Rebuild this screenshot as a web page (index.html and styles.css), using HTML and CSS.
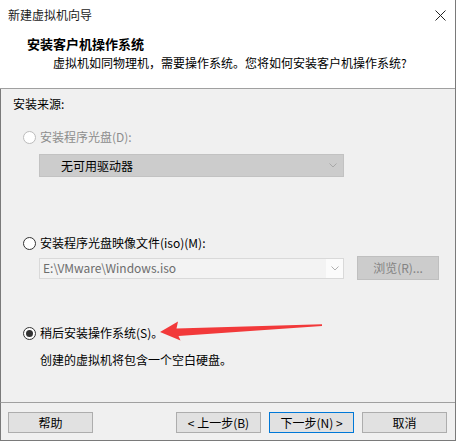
FILE: index.html
```html
<!DOCTYPE html>
<html lang="zh-CN">
<head>
<meta charset="utf-8">
<title>新建虚拟机向导</title>
<link rel="stylesheet" href="styles.css">
</head>
<body>
<div class="window">
  <div class="titlebar">
    <span class="title">新建虚拟机向导</span>
    <svg class="close" width="11" height="11" viewBox="0 0 11 11"><path d="M0.5 0.5 L10.5 10.5 M10.5 0.5 L0.5 10.5" stroke="#222" stroke-width="1" fill="none"/></svg>
  </div>
  <div class="header">
    <div class="h-title">安装客户机操作系统</div>
    <div class="h-sub">虚拟机如同物理机，需要操作系统。您将如何安装客户机操作系统?</div>
  </div>
  <div class="content">
    <div class="label">安装来源:</div>
    <div class="radio-row disabled r1"><span class="radio"></span><span>安装程序光盘(D):</span></div>
    <div class="combo combo-off">
      <span class="combo-text">无可用驱动器</span>
      <svg class="chev" width="8" height="5" viewBox="0 0 8 5"><path d="M0.5 0.5 L4 4 L7.5 0.5" stroke="#a8a8a8" fill="none"/></svg>
    </div>
    <div class="radio-row r2"><span class="radio"></span><span>安装程序光盘映像文件(iso)(M):</span></div>
    <div class="iso-row">
      <div class="combo combo-iso">
        <span class="combo-text">E:\VMware\Windows.iso</span>
        <span class="combo-btn"><svg class="chev" width="8" height="5" viewBox="0 0 8 5"><path d="M0.5 0.5 L4 4 L7.5 0.5" stroke="#b0b0b0" fill="none"/></svg></span>
      </div>
      <div class="btn btn-off browse">浏览(R)...</div>
    </div>
    <div class="radio-row r3"><span class="radio checked"></span><span>稍后安装操作系统(S)。</span></div>
    <div class="note">创建的虚拟机将包含一个空白硬盘。</div>
  </div>
  <div class="footer">
    <div class="btn">帮助</div>
    <div class="btn back">&lt; 上一步(B)</div>
    <div class="btn focus">下一步(N) &gt;</div>
    <div class="btn">取消</div>
  </div>
  <svg class="annot" width="456" height="441" viewBox="0 0 456 441">
    <polygon points="160,332 178,321.5 176.5,328.5 322,324.3 322,326 178.5,336 180.5,340.5" fill="#f2393a"/>
  </svg>
</div>
</body>
</html>
```

FILE: styles.css
```css
html, body {
  margin: 0;
  padding: 0;
  background: #fff;
}

.window {
  position: relative;
  width: 456px;
  height: 441px;
  box-sizing: border-box;
  display: flex;
  flex-direction: column;
  background: #fff;
  border-right: 1px solid #7a7a7a;
  border-bottom: 1px solid #7a7a7a;
  font-family: "Noto Sans CJK SC", "Noto Sans", sans-serif;
  font-size: 12px;
  color: #000;
}

.titlebar {
  height: 30px;
  flex: none;
  display: flex;
  align-items: center;
  justify-content: space-between;
  padding: 0 9px 0 8px;
  line-height: 16px;
}

.title {
  color: #1a1a1a;
}

.header {
  flex: none;
  height: 53px;
  padding: 5px 0 0 27px;
  border-bottom: 1px solid #a0a0a0;
}

.h-title {
  font-weight: bold;
  font-size: 13px;
  line-height: 18px;
}

.h-sub {
  margin-top: 2px;
  padding-left: 26px;
  line-height: 16px;
}

.content {
  flex: 1;
  background: #f0f0f0;
  border-left: 1px solid #7a7a7a;
  padding: 7px 0 0 12px;
}

.label {
  line-height: 16px;
}

.radio-row {
  display: flex;
  align-items: center;
  height: 16px;
  line-height: 16px;
  margin-left: 10px;
  gap: 4px;
}

.radio {
  width: 13px;
  height: 13px;
  box-sizing: border-box;
  border: 1px solid #333;
  border-radius: 50%;
  background: #fff;
  display: flex;
  align-items: center;
  justify-content: center;
}

.radio.checked::after {
  content: "";
  width: 7px;
  height: 7px;
  border-radius: 50%;
  background: #333;
}

.disabled {
  color: #8d8d8d;
}

.disabled .radio {
  border-color: #bcbcbc;
}

.r1 { margin-top: 17px; }
.r2 { margin-top: 58px; }
.r3 { margin-top: 45px; }

.combo {
  width: 305px;
  box-sizing: border-box;
  margin-left: 26px;
  display: flex;
  align-items: center;
}

.combo-off {
  margin-top: 9px;
  height: 23px;
  background: #cccccc;
  border: 1px solid #c2c2c2;
  padding: 0 6px 0 21px;
  justify-content: space-between;
}

.combo-off .combo-text {
  line-height: 16px;
}

.iso-row {
  margin-top: 5px;
  height: 24px;
  display: flex;
  align-items: center;
}

.combo-iso {
  height: 21px;
  background: #f3f3f3;
  border: 1px solid #d9d9d9;
  color: #6d6d6d;
}

.combo-iso .combo-text {
  flex: 1;
  padding-left: 3px;
  line-height: 16px;
}

.combo-btn {
  width: 17px;
  height: 100%;
  background: #fbfbfb;
  display: flex;
  align-items: center;
  justify-content: center;
}

.btn {
  width: 85px;
  height: 21px;
  box-sizing: border-box;
  border: 1px solid #adadad;
  background: #e1e1e1;
  display: flex;
  align-items: center;
  justify-content: center;
  line-height: 16px;
}

.btn-off {
  background: #cccccc;
  border-color: #bfbfbf;
  color: #838383;
}

.browse {
  width: 82px;
  height: 24px;
  margin-left: 13px;
}

.note {
  margin-top: 11px;
  padding-left: 27px;
  line-height: 16px;
}

.footer {
  flex: none;
  display: flex;
  gap: 8px;
  background: #f0f0f0;
  border-left: 1px solid #7a7a7a;
  border-top: 1px solid #a0a0a0;
  padding: 9px 8px 7px 7px;
}

.back {
  margin-left: auto;
}

.focus {
  border-color: #0078d7;
}

.annot {
  position: absolute;
  left: 0;
  top: 0;
  pointer-events: none;
}
```
